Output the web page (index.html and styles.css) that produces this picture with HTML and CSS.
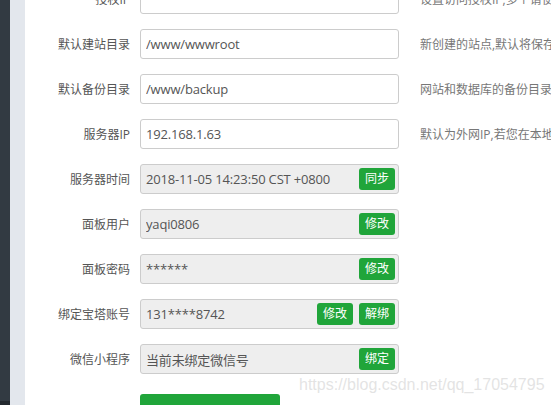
FILE: index.html
```html
<!DOCTYPE html>
<html lang="zh-CN">
<head>
<meta charset="utf-8">
<link rel="stylesheet" href="styles.css">
</head>
<body>
<div class="page">
  <aside class="sidebar"><div class="sb-fill"></div><div class="sb-bottom"></div></aside>
  <div class="strip"></div>
  <main class="content">
    <div class="form">
      <div class="row">
        <div class="label">授权IP</div>
        <div class="box"></div>
        <div class="desc">设置访问授权IP,多个请使用逗号隔开</div>
      </div>
      <div class="row">
        <div class="label">默认建站目录</div>
        <div class="box"><span class="val">/www/wwwroot</span></div>
        <div class="desc">新创建的站点,默认将保存到此目录</div>
      </div>
      <div class="row">
        <div class="label">默认备份目录</div>
        <div class="box"><span class="val">/www/backup</span></div>
        <div class="desc">网站和数据库的备份目录</div>
      </div>
      <div class="row">
        <div class="label">服务器IP</div>
        <div class="box"><span class="val">192.168.1.63</span></div>
        <div class="desc">默认为外网IP,若您在本地虚拟机测试</div>
      </div>
      <div class="row">
        <div class="label">服务器时间</div>
        <div class="box disabled"><span class="val">2018-11-05 14:23:50 CST +0800</span><span class="btn">同步</span></div>
        <div class="desc"></div>
      </div>
      <div class="row">
        <div class="label">面板用户</div>
        <div class="box disabled"><span class="val">yaqi0806</span><span class="btn">修改</span></div>
        <div class="desc"></div>
      </div>
      <div class="row">
        <div class="label">面板密码</div>
        <div class="box disabled"><span class="val">******</span><span class="btn">修改</span></div>
        <div class="desc"></div>
      </div>
      <div class="row">
        <div class="label">绑定宝塔账号</div>
        <div class="box disabled"><span class="val">131****8742</span><span class="btn">修改</span><span class="btn">解绑</span></div>
        <div class="desc"></div>
      </div>
      <div class="row">
        <div class="label">微信小程序</div>
        <div class="box disabled"><span class="val">当前未绑定微信号</span><span class="btn">绑定</span></div>
        <div class="desc"></div>
      </div>
    </div>
    <div class="actions"><button class="save">保存</button></div>
    <div class="watermark">https://blog.csdn.net/qq_17054795</div>
  </main>
</div>
</body>
</html>
```
FILE: styles.css
```css
html, body {
  margin: 0;
  padding: 0;
  height: 405px;
  overflow: hidden;
  background: #fff;
}
body {
  font-family: "Open Sans", "Noto Sans CJK SC", sans-serif;
  font-size: 12px;
  color: #555;
}
.page {
  display: flex;
  height: 405px;
}
.sidebar {
  width: 10px;
  flex: none;
  display: flex;
  flex-direction: column;
}
.sb-fill { flex: 1; background: #323a42; }
.sb-bottom { height: 4px; background: #23292f; }
.strip {
  width: 15px;
  flex: none;
  background: #e3e7ed;
}
.content {
  flex: 1;
  position: relative;
  overflow: hidden;
}
.form {
  margin-top: -16px;
  display: flex;
  flex-direction: column;
  gap: 15px;
}
.row {
  display: grid;
  grid-template-columns: 105px 259px 1fr;
  column-gap: 10px;
  align-items: center;
  height: 30px;
}
.label {
  text-align: right;
  color: #555;
  white-space: nowrap;
}
.box {
  box-sizing: border-box;
  height: 30px;
  border: 1px solid #ccc;
  border-radius: 3px;
  background: #fff;
  display: flex;
  align-items: center;
  padding: 0 3px 0 5px;
  gap: 6px;
  color: #555;
  font-size: 13px;
}
.box.disabled { background: #eee; }
.val {
  flex: 1;
  white-space: nowrap;
  overflow: hidden;
  letter-spacing: -0.17px;
}
.btn {
  flex: none;
  width: 36px;
  height: 22px;
  line-height: 22px;
  text-align: center;
  background: #20a53a;
  color: #fff;
  border-radius: 3px;
  font-size: 12px;
  letter-spacing: 0;
}
.desc {
  margin-left: 11px;
  white-space: nowrap;
  overflow: hidden;
  color: #777;
}
.actions {
  margin-top: 20px;
  padding-left: 115px;
}
.save {
  width: 140px;
  height: 40px;
  border: none;
  border-radius: 3px;
  background: #20a53a;
  color: #fff;
  font: inherit;
}
.watermark {
  position: absolute;
  left: 274px;
  top: 376px;
  font-family: "Liberation Sans", sans-serif;
  font-size: 16px;
  color: rgba(200, 200, 200, 0.5);
  white-space: nowrap;
}
```
